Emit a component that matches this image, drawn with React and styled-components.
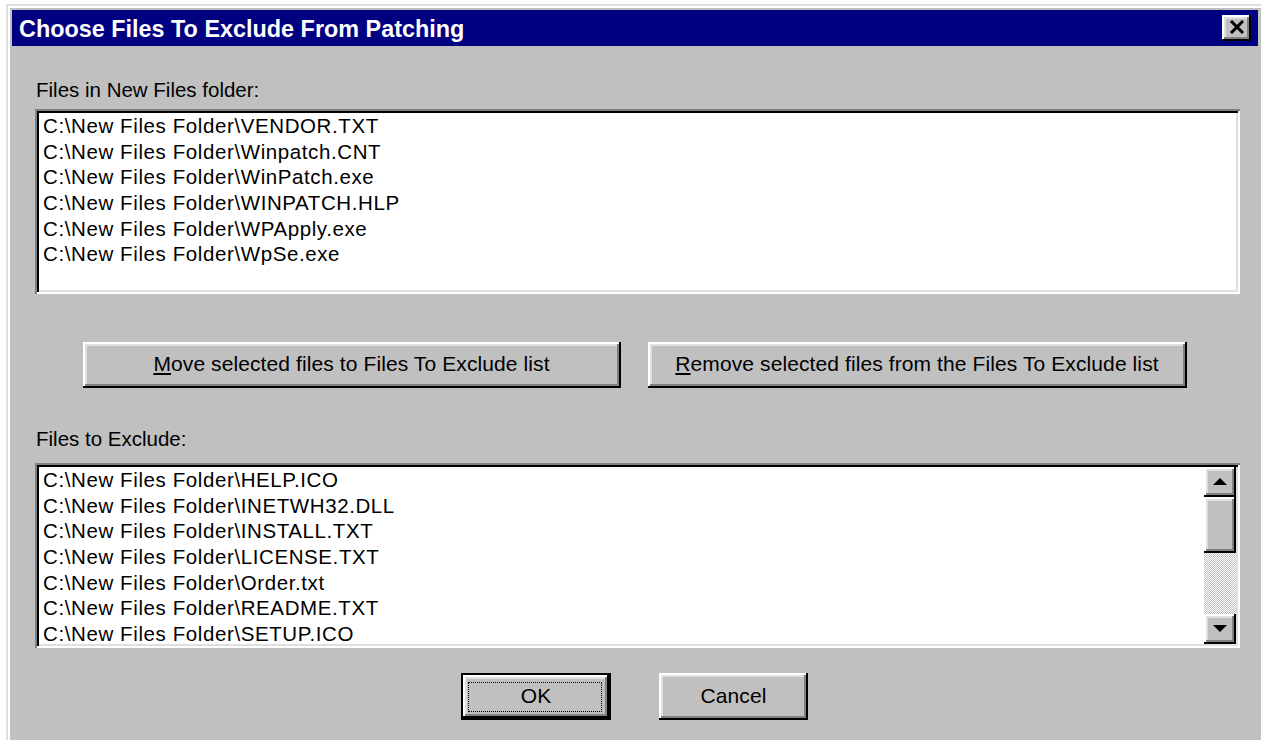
import React from "react";
import styled, { createGlobalStyle, css } from "styled-components";

const GlobalStyle = createGlobalStyle`
  html, body {
    margin: 0;
    padding: 0;
    background: #ffffff;
    overflow: hidden;
  }
  body {
    font-family: "Liberation Sans", Arial, sans-serif;
  }
`;

const raised = css`
  box-shadow:
    inset -2px -2px #000000,
    inset 2px 2px #ffffff,
    inset -4px -4px #808080,
    inset 4px 4px #dfdfdf;
`;

const Window = styled.div`
  box-sizing: border-box;
  margin: 4px 0 0 6px;
  width: 1260px;
  height: 744px;
  padding: 6px 8px 6px 6px;
  background: #c0c0c0;
  display: flex;
  flex-direction: column;
  box-shadow:
    inset 2px 2px #dfdfdf,
    inset -2px -2px #000000,
    inset 4px 4px #ffffff,
    inset -4px -4px #808080;
`;

const TitleBar = styled.div`
  height: 36px;
  flex: none;
  background: #000080;
  display: flex;
  align-items: center;
  padding: 0 7px 0 7px;
`;

const Title = styled.span`
  color: #ffffff;
  font-family: "Liberation Sans", Arial, sans-serif;
  font-weight: 700;
  font-size: 23.4px;
  line-height: 36px;
  white-space: nowrap;
  padding-top: 1px;
`;

const CloseButton = styled.button`
  margin-left: auto;
  width: 29px;
  height: 26px;
  padding: 0 0 2px 0;
  border: none;
  background: #c0c0c0;
  display: flex;
  align-items: center;
  justify-content: center;
  ${raised}
`;

const Content = styled.div`
  flex: 1;
  display: flex;
  flex-direction: column;
  padding: 0 18px 0 23px;
`;

const Label = styled.div`
  margin-top: ${(p) => p.$top}px;
  height: 26px;
  line-height: 26px;
  padding-left: 1px;
  font-size: 20.5px;
  color: #000000;
  white-space: nowrap;
`;

const ListBox = styled.div`
  box-sizing: border-box;
  margin-top: ${(p) => p.$top}px;
  height: 185px;
  padding: 4px;
  background: #ffffff;
  display: flex;
  box-shadow:
    inset 2px 2px #808080,
    inset -2px -2px #ffffff,
    inset 4px 4px #000000,
    inset -4px -4px #dfdfdf;
`;

const Items = styled.ul`
  flex: 1;
  list-style: none;
  margin: 0;
  padding: 0 0 0 4px;
  overflow: hidden;
`;

const Item = styled.li`
  height: 25.7px;
  line-height: 25.7px;
  font-size: 20.5px;
  letter-spacing: 0.6px;
  color: #000000;
  white-space: nowrap;
`;

const ScrollBar = styled.div`
  width: 32px;
  flex: none;
  display: flex;
  flex-direction: column;
`;

const ArrowButton = styled.div`
  height: 30px;
  flex: none;
  background: #c0c0c0;
  display: flex;
  align-items: center;
  justify-content: center;
  ${raised}
`;

const Thumb = styled.div`
  height: 56px;
  flex: none;
  background: #c0c0c0;
  ${raised}
`;

const Track = styled.div`
  flex: 1;
  background-color: #c0c0c0;
  background-image: conic-gradient(
    #ffffff 25%,
    #c0c0c0 0 50%,
    #ffffff 0 75%,
    #c0c0c0 0
  );
  background-size: 2px 2px;
`;

const ButtonRow = styled.div`
  margin-top: ${(p) => p.$top}px;
  display: flex;
  justify-content: center;
  gap: ${(p) => p.$gap}px;
  padding-right: 6px;
`;

const Button = styled.button`
  position: relative;
  box-sizing: border-box;
  width: ${(p) => p.$width}px;
  height: ${(p) => p.$height}px;
  padding: 0 0 2px 0;
  border: none;
  background: #c0c0c0;
  font-family: "Liberation Sans", Arial, sans-serif;
  font-size: 21px;
  letter-spacing: 0.1px;
  color: #000000;
  white-space: nowrap;
  ${(p) =>
    p.$default
      ? css`
          box-shadow:
            inset 0 0 0 2px #000000,
            inset -4px -4px #000000,
            inset 4px 4px #ffffff,
            inset -6px -6px #808080,
            inset 6px 6px #dfdfdf;
          &::after {
            content: "";
            position: absolute;
            inset: 9px 9px 8px 7px;
            border: 1px dotted #000000;
          }
        `
      : raised}

  u {
    text-decoration-thickness: 2px;
    text-underline-offset: 2px;
  }
`;

const CloseGlyph = () => (
  <svg width="16" height="14" viewBox="0 0 16 14">
    <path d="M2 1 L14 13 M14 1 L2 13" stroke="#000" strokeWidth="3" fill="none" />
  </svg>
);

const Arrow = ({ down }) => (
  <svg width="14" height="8" viewBox="0 0 14 8">
    <path d={down ? "M0 0 H14 L7 7 Z" : "M7 0 L14 7 H0 Z"} fill="#000" />
  </svg>
);

const newFiles = [
  "C:\\New Files Folder\\VENDOR.TXT",
  "C:\\New Files Folder\\Winpatch.CNT",
  "C:\\New Files Folder\\WinPatch.exe",
  "C:\\New Files Folder\\WINPATCH.HLP",
  "C:\\New Files Folder\\WPApply.exe",
  "C:\\New Files Folder\\WpSe.exe",
];

const excluded = [
  "C:\\New Files Folder\\HELP.ICO",
  "C:\\New Files Folder\\INETWH32.DLL",
  "C:\\New Files Folder\\INSTALL.TXT",
  "C:\\New Files Folder\\LICENSE.TXT",
  "C:\\New Files Folder\\Order.txt",
  "C:\\New Files Folder\\README.TXT",
  "C:\\New Files Folder\\SETUP.ICO",
];

export default function App() {
  return (
    <>
      <GlobalStyle />
      <Window>
        <TitleBar>
          <Title>Choose Files To Exclude From Patching</Title>
          <CloseButton aria-label="Close">
            <CloseGlyph />
          </CloseButton>
        </TitleBar>
        <Content>
          <Label $top={31}>Files in New Files folder:</Label>
          <ListBox $top={6}>
            <Items>
              {newFiles.map((f) => (
                <Item key={f}>{f}</Item>
              ))}
            </Items>
          </ListBox>

          <ButtonRow $top={48} $gap={27}>
            <Button $width={538} $height={46}>
              <u>M</u>ove selected files to Files To Exclude list
            </Button>
            <Button $width={539} $height={46}>
              <u>R</u>emove selected files from the Files To Exclude list
            </Button>
          </ButtonRow>

          <Label $top={38}>Files to Exclude:</Label>
          <ListBox $top={11}>
            <Items>
              {excluded.map((f) => (
                <Item key={f}>{f}</Item>
              ))}
            </Items>
            <ScrollBar>
              <ArrowButton>
                <Arrow />
              </ArrowButton>
              <Thumb />
              <Track />
              <ArrowButton>
                <Arrow down />
              </ArrowButton>
            </ScrollBar>
          </ListBox>

          <ButtonRow $top={25} $gap={48}>
            <Button $default $width={150} $height={47}>
              OK
            </Button>
            <Button $width={149} $height={47}>
              Cancel
            </Button>
          </ButtonRow>
        </Content>
      </Window>
    </>
  );
}
